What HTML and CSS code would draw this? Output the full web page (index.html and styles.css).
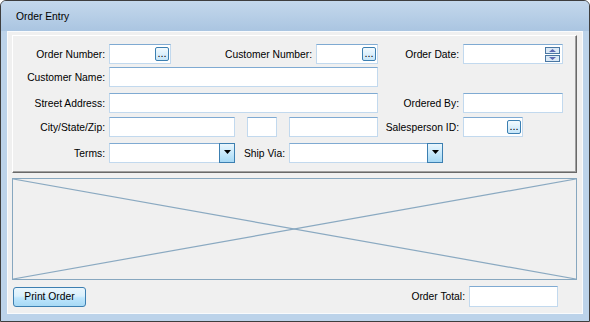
FILE: index.html
```html
<!DOCTYPE html>
<html lang="en">
<head>
    <meta charset="UTF-8">
    <title>Order Entry</title>
    <link rel="stylesheet" href="styles.css">
</head>
<body>
    <div class="window">
        <div class="titlebar">Order Entry</div>
        <div class="client">
            <div class="group">
                <div class="row">
                    <span class="lbl w96">Order Number:</span>
                    <div class="field w62"><span class="ell">...</span></div>
                    <span class="lbl w145">Customer Number:</span>
                    <div class="field w62"><span class="ell">...</span></div>
                    <span class="lbl w85">Order Date:</span>
                    <div class="field w100">
                        <div class="spin">
                            <span class="spin-btn"><svg width="7" height="3" viewBox="0 0 7 3"><polygon points="0,3 7,3 3.5,0" fill="#5d6ab4"/></svg></span>
                            <span class="spin-btn"><svg width="7" height="3" viewBox="0 0 7 3"><polygon points="0,0 7,0 3.5,3" fill="#5d6ab4"/></svg></span>
                        </div>
                    </div>
                </div>
                <div class="row gap3">
                    <span class="lbl w96">Customer Name:</span>
                    <div class="field w269"></div>
                </div>
                <div class="row gap6">
                    <span class="lbl w96">Street Address:</span>
                    <div class="field w269"></div>
                    <span class="lbl w85">Ordered By:</span>
                    <div class="field w100"></div>
                </div>
                <div class="row gap4">
                    <span class="lbl w96">City/State/Zip:</span>
                    <div class="field w126"></div>
                    <div class="field w30 sep"></div>
                    <div class="field w89 sep"></div>
                    <span class="lbl w85">Salesperson ID:</span>
                    <div class="field w60"><span class="ell">...</span></div>
                </div>
                <div class="row gap6">
                    <span class="lbl w96">Terms:</span>
                    <div class="combo w126">
                        <div class="combo-text"></div>
                        <span class="drop"><svg width="7" height="4" viewBox="0 0 7 4"><polygon points="0,0 7,0 3.5,4" fill="#000"/></svg></span>
                    </div>
                    <span class="lbl w54">Ship Via:</span>
                    <div class="combo w154">
                        <div class="combo-text"></div>
                        <span class="drop"><svg width="7" height="4" viewBox="0 0 7 4"><polygon points="0,0 7,0 3.5,4" fill="#000"/></svg></span>
                    </div>
                </div>
            </div>

            <div class="preview">
                <svg width="100%" height="100%" viewBox="0 0 100 100" preserveAspectRatio="none">
                    <line x1="0" y1="0" x2="100" y2="100" stroke="#8aa9c1" stroke-width="1.2" vector-effect="non-scaling-stroke"/>
                    <line x1="0" y1="100" x2="100" y2="0" stroke="#8aa9c1" stroke-width="1.2" vector-effect="non-scaling-stroke"/>
                </svg>
            </div>

            <div class="footer">
                <button class="btn">Print Order</button>
                <div class="total">
                    <span class="lbl">Order Total:</span>
                    <div class="field w89 tall"></div>
                </div>
            </div>
        </div>
    </div>
</body>
</html>
```

FILE: styles.css
```css
body {
    margin: 0;
    font-family: "Liberation Sans", Arial, sans-serif;
    font-size: 10.3px;
    color: #000;
}
.window {
    width: 590px;
    height: 322px;
    box-sizing: border-box;
    border: 1px solid #3e3e3e;
    border-radius: 6px 6px 0 0;
    background: #bcd3ea;
    display: flex;
    flex-direction: column;
    overflow: hidden;
}
.titlebar {
    height: 30px;
    flex: none;
    padding-left: 15px;
    display: flex;
    align-items: center;
    background: linear-gradient(#c4d8ec, #aac5e1);
}
.client {
    flex: 1;
    margin: 0 6px 7px;
    background: #f0f0f0;
    border: 1px solid #f9fbfd;
    display: flex;
    flex-direction: column;
}
.group {
    margin: 3px 5px 0 4px;
    padding: 8px 0 9px;
    border: 1px solid;
    border-color: #fff #696969 #696969 #fff;
    box-shadow: inset -1px -1px 0 #a0a0a0;
}
.row {
    display: flex;
    align-items: center;
    height: 20px;
}
.gap3 { margin-top: 3px; }
.gap4 { margin-top: 4px; }
.gap6 { margin-top: 6px; }
.lbl {
    flex: none;
    box-sizing: border-box;
    padding-right: 4px;
    text-align: right;
    white-space: nowrap;
}
.w30 { width: 30px; }
.w54 { width: 54px; }
.w60 { width: 60px; }
.w62 { width: 62px; }
.w85 { width: 85px; }
.w89 { width: 89px; }
.w96 { width: 96px; }
.w100 { width: 100px; }
.w126 { width: 126px; }
.w145 { width: 145px; }
.w154 { width: 154px; }
.w269 { width: 269px; }
.sep { margin-left: 12px; }
.field {
    flex: none;
    box-sizing: border-box;
    height: 20px;
    background: #fff;
    border: 1px solid #c2d9ee;
    border-top-color: #7faad2;
    display: flex;
    align-items: center;
    justify-content: flex-end;
    padding-right: 1px;
}
.field.tall { height: 21px; }
.ell {
    box-sizing: border-box;
    width: 14px;
    height: 14px;
    border: 1px solid #3c7fb1;
    border-radius: 2px;
    background: linear-gradient(#f3fafe, #c6e6f9);
    font-size: 11px;
    line-height: 11px;
    text-align: center;
    overflow: hidden;
}
.spin {
    display: flex;
    flex-direction: column;
    gap: 1px;
    margin-right: 1px;
}
.spin-btn {
    box-sizing: border-box;
    width: 15px;
    height: 7px;
    border: 1px solid #4a77a3;
    background: #dbe9f6;
    display: flex;
    align-items: center;
    justify-content: center;
}
.spin-btn svg { display: block; }
.combo {
    flex: none;
    display: flex;
    height: 20px;
}
.combo-text {
    flex: 1;
    background: #fff;
    border: 1px solid #c2d9ee;
    border-top-color: #7faad2;
    border-right: none;
}
.drop {
    box-sizing: border-box;
    width: 16px;
    height: 20px;
    border: 1px solid #3c7fb1;
    background: linear-gradient(#eaf6fd, #c8e9fb 50%, #a7d9f5);
    display: flex;
    align-items: center;
    justify-content: center;
    padding-bottom: 3px;
}
.drop svg { display: block; }
.preview {
    margin: 5px 5px 0 4px;
    height: 102px;
    box-sizing: border-box;
    border: 1px solid #87a7bf;
}
.preview svg { display: block; }
.footer {
    display: flex;
    align-items: center;
    justify-content: space-between;
    margin-top: 6px;
    padding: 0 24px 0 5px;
}
.btn {
    width: 73px;
    height: 20px;
    padding: 0;
    font: inherit;
    color: #000;
    border: 1px solid #3c7fb1;
    border-radius: 3px;
    background: linear-gradient(#eaf6fd, #d9f0fc 45%, #bee6fd 55%, #a7d9f5);
}
.total {
    display: flex;
    align-items: center;
}
```
